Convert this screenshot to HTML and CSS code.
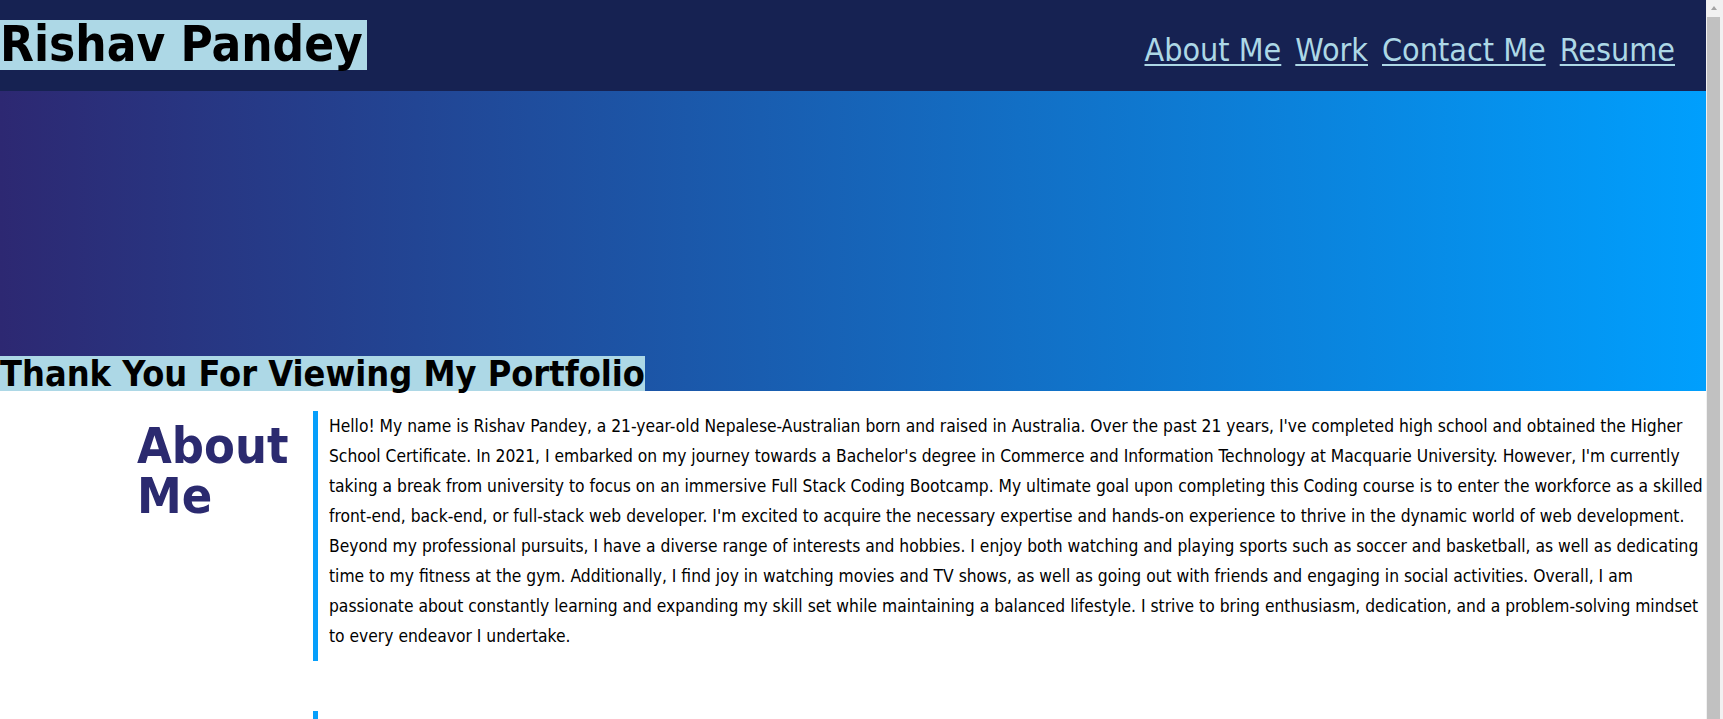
FILE: index.html
```html
<!DOCTYPE html>
<html lang="en">
<head>
<meta charset="utf-8">
<title>Rishav Pandey Portfolio</title>
<link rel="stylesheet" href="styles.css">
</head>
<body>
<header class="site-header">
  <h1 class="name">Rishav Pandey</h1>
  <nav class="nav">
    <a href="#about">About Me</a>
    <a href="#work">Work</a>
    <a href="#contact">Contact Me</a>
    <a href="#resume">Resume</a>
  </nav>
</header>
<section class="hero">
  <h2 class="hero-title">Thank You For Viewing My Portfolio</h2>
</section>
<main>
  <section class="section" id="about">
    <h2 class="section-title">About Me</h2>
    <div class="section-body">
      <p>Hello! My name is Rishav Pandey, a 21-year-old Nepalese-Australian born and raised in Australia. Over the past 21 years, I've completed high school and obtained the Higher School Certificate. In 2021, I embarked on my journey towards a Bachelor's degree in Commerce and Information Technology at Macquarie University. However, I'm currently taking a break from university to focus on an immersive Full Stack Coding Bootcamp. My ultimate goal upon completing this Coding course is to enter the workforce as a skilled front-end, back-end, or full-stack web developer. I'm excited to acquire the necessary expertise and hands-on experience to thrive in the dynamic world of web development. Beyond my professional pursuits, I have a diverse range of interests and hobbies. I enjoy both watching and playing sports such as soccer and basketball, as well as dedicating time to my fitness at the gym. Additionally, I find joy in watching movies and TV shows, as well as going out with friends and engaging in social activities. Overall, I am passionate about constantly learning and expanding my skill set while maintaining a balanced lifestyle. I strive to bring enthusiasm, dedication, and a problem-solving mindset to every endeavor I undertake.</p>
    </div>
  </section>
  <section class="section" id="work">
    <h2 class="section-title">Work</h2>
    <div class="section-body">
      <p>&nbsp;</p>
      <p>&nbsp;</p>
    </div>
  </section>
</main>
<div class="scrollbar" aria-hidden="true">
  <div class="scroll-arrow"></div>
  <div class="scroll-thumb"></div>
</div>
</body>
</html>
```
FILE: styles.css
```css
html, body {
  margin: 0;
  padding: 0;
}

body {
  font-family: "DejaVu Sans Condensed", "DejaVu Sans", sans-serif;
  color: #000;
  background: #fff;
  margin-right: 17px;
}

.scrollbar {
  position: fixed;
  top: 0;
  right: 0;
  bottom: 0;
  width: 17px;
  background: #f1f1f1;
  display: flex;
  flex-direction: column;
}

.scroll-arrow {
  height: 17px;
  flex: 0 0 17px;
  position: relative;
}

.scroll-arrow::after {
  content: "";
  position: absolute;
  left: 5px;
  top: 6px;
  border-left: 3.5px solid transparent;
  border-right: 3.5px solid transparent;
  border-bottom: 4px solid #a3a3a3;
}

.scroll-thumb {
  flex: 1;
  margin: 0 3px -20px 1px;
  background: #c1c1c1;
}

.site-header {
  display: flex;
  justify-content: space-between;
  align-items: baseline;
  background: #162252;
  height: 91px;
}

.name {
  margin: 20px 0 0;
  font-size: 49px;
  line-height: 50px;
  font-weight: bold;
  background: #add8e6;
  padding-right: 4px;
}

.nav {
  display: flex;
  gap: 14px;
  padding-right: 31px;
}

.nav a {
  color: #add8e6;
  font-size: 32px;
  text-decoration: underline;
  text-underline-offset: 3px;
  text-decoration-thickness: 2px;
}

.hero {
  display: flex;
  align-items: flex-end;
  height: 300px;
  background: linear-gradient(to right, #2d2872, #009ffd);
}

.hero-title {
  margin: 0;
  font-size: 35.8px;
  line-height: 35px;
  font-weight: bold;
  background: #add8e6;
  color: #000;
}

.section {
  display: flex;
  margin-top: 20px;
}

.section + .section {
  margin-top: 50px;
}

.section-title {
  flex: 0 0 176px;
  margin: 10px 0 0;
  padding-left: 137px;
  font-size: 50px;
  line-height: 50px;
  font-weight: bold;
  color: #2b2a6f;
  box-sizing: content-box;
  width: 176px;
}

.section-body {
  flex: 1;
  border-left: 5px solid #069ffb;
  padding: 0 0 10px 11px;
}

.section-body p {
  margin: 0;
  font-size: 17.3px;
  line-height: 30px;
}

#work .section-title {
  visibility: hidden;
}
```
